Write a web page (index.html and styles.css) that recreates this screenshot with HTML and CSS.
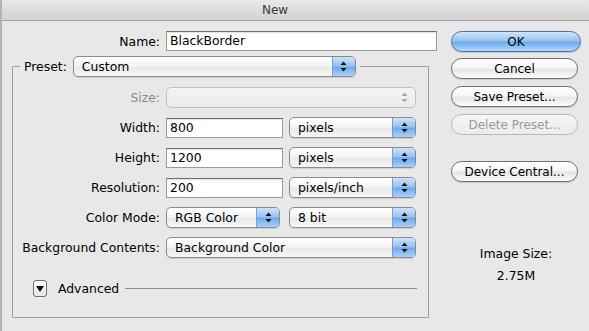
FILE: index.html
```html
<!DOCTYPE html>
<html lang="en">
<head>
  <meta charset="UTF-8" />
  <title>New</title>
  <link rel="stylesheet" href="styles.css">
</head>
<body>
  <div class="window">
    <div class="titlebar">New</div>
    <div class="content">
      <div class="main">
        <div class="name-row">
          <label class="lbl">Name:</label>
          <div class="field name-field">BlackBorder</div>
        </div>

        <fieldset class="preset">
          <legend>
            <span class="legend-lbl">Preset:</span>
            <div class="popup preset-popup">
              <span class="popup-text">Custom</span>
              <span class="arrows"><svg width="7" height="11" viewBox="0 0 7 11"><path d="M3.5 0.5 L6.5 4 L0.5 4 Z M0.5 7 L6.5 7 L3.5 10.5 Z" fill="#111"/></svg></span>
            </div>
          </legend>

          <div class="rows">
            <div class="row">
              <label class="lbl disabled">Size:</label>
              <div class="popup off w-full">
                <span class="popup-text"></span>
                <span class="arrows"><svg width="7" height="11" viewBox="0 0 7 11"><path d="M3.5 0.5 L6.5 4 L0.5 4 Z M0.5 7 L6.5 7 L3.5 10.5 Z" fill="#a8a8a8"/></svg></span>
              </div>
            </div>
            <div class="row">
              <label class="lbl">Width:</label>
              <div class="field w-num">800</div>
              <div class="popup w-unit">
                <span class="popup-text">pixels</span>
                <span class="arrows"><svg width="7" height="11" viewBox="0 0 7 11"><path d="M3.5 0.5 L6.5 4 L0.5 4 Z M0.5 7 L6.5 7 L3.5 10.5 Z" fill="#111"/></svg></span>
              </div>
            </div>
            <div class="row">
              <label class="lbl">Height:</label>
              <div class="field w-num">1200</div>
              <div class="popup w-unit">
                <span class="popup-text">pixels</span>
                <span class="arrows"><svg width="7" height="11" viewBox="0 0 7 11"><path d="M3.5 0.5 L6.5 4 L0.5 4 Z M0.5 7 L6.5 7 L3.5 10.5 Z" fill="#111"/></svg></span>
              </div>
            </div>
            <div class="row">
              <label class="lbl">Resolution:</label>
              <div class="field w-num">200</div>
              <div class="popup w-unit">
                <span class="popup-text">pixels/inch</span>
                <span class="arrows"><svg width="7" height="11" viewBox="0 0 7 11"><path d="M3.5 0.5 L6.5 4 L0.5 4 Z M0.5 7 L6.5 7 L3.5 10.5 Z" fill="#111"/></svg></span>
              </div>
            </div>
            <div class="row">
              <label class="lbl">Color Mode:</label>
              <div class="popup w-mode">
                <span class="popup-text">RGB Color</span>
                <span class="arrows"><svg width="7" height="11" viewBox="0 0 7 11"><path d="M3.5 0.5 L6.5 4 L0.5 4 Z M0.5 7 L6.5 7 L3.5 10.5 Z" fill="#111"/></svg></span>
              </div>
              <div class="popup w-unit">
                <span class="popup-text">8 bit</span>
                <span class="arrows"><svg width="7" height="11" viewBox="0 0 7 11"><path d="M3.5 0.5 L6.5 4 L0.5 4 Z M0.5 7 L6.5 7 L3.5 10.5 Z" fill="#111"/></svg></span>
              </div>
            </div>
            <div class="row">
              <label class="lbl">Background Contents:</label>
              <div class="popup w-full">
                <span class="popup-text">Background Color</span>
                <span class="arrows"><svg width="7" height="11" viewBox="0 0 7 11"><path d="M3.5 0.5 L6.5 4 L0.5 4 Z M0.5 7 L6.5 7 L3.5 10.5 Z" fill="#111"/></svg></span>
              </div>
            </div>
          </div>

          <div class="advanced">
            <span class="disclosure"><svg width="8" height="6" viewBox="0 0 8 6"><path d="M0 0 L8 0 L4 6 Z" fill="#111"/></svg></span>
            <span class="adv-text">Advanced</span>
            <span class="adv-line"></span>
          </div>
        </fieldset>
      </div>

      <div class="side">
        <button class="btn default">OK</button>
        <button class="btn">Cancel</button>
        <button class="btn">Save Preset...</button>
        <button class="btn off">Delete Preset...</button>
        <button class="btn central">Device Central...</button>
        <div class="image-size">
          <div>Image Size:</div>
          <div class="size-val">2.75M</div>
        </div>
      </div>
    </div>
  </div>
</body>
</html>
```

FILE: styles.css
```css
body {
  margin: 0;
  background: #e8e8e8;
  font-family: "DejaVu Sans", sans-serif;
  font-size: 12.4px;
  color: #000;
}

.window {
  width: 589px;
  height: 331px;
  border-left: 2px solid #b9b3ad;
  box-sizing: border-box;
  overflow: hidden;
}

.titlebar {
  height: 20px;
  line-height: 20px;
  text-align: center;
  color: #3a3a3a;
  font-size: 12px;
  background: linear-gradient(to bottom, #e9e9e9, #d2d2d2);
  border-bottom: 1px solid #a2a2a2;
  padding-right: 41px;
}

.content {
  display: flex;
  padding-top: 10px;
}

.main {
  padding-left: 10px;
  width: 425px;
}

/* etiquetas */
.lbl {
  text-align: right;
  white-space: nowrap;
}

.disabled {
  color: #8c8c8c;
}

.name-row {
  display: grid;
  grid-template-columns: 148px 271px;
  column-gap: 6px;
  align-items: center;
  height: 20px;
}

.field {
  height: 20px;
  box-sizing: border-box;
  background: #fff;
  border: 1px solid #9a9a9a;
  border-top-color: #6e6e6e;
  box-shadow: inset 0 1px 1px rgba(0, 0, 0, 0.12);
  padding: 0 3px;
  line-height: 18px;
}

.name-field {
  width: 271px;
}

/* grupo preset */
.preset {
  margin: 5px 0 0 0;
  padding: 10px 11px 20px 0;
  width: 417px;
  box-sizing: border-box;
  border: 1px solid #9c9c9c;
  border-radius: 1px;
}

.preset legend {
  display: flex;
  align-items: center;
  margin-left: 7px;
  padding: 0 4px;
}

.legend-lbl {
  margin-right: 6px;
}

.popup {
  display: flex;
  align-items: center;
  height: 21px;
  box-sizing: border-box;
  border: 1px solid #8b8b8b;
  border-radius: 5px;
  background: linear-gradient(to bottom, #ffffff 0%, #f5f5f5 45%, #e9e9e9 55%, #f7f7f7 100%);
  box-shadow: 0 1px 1px rgba(0, 0, 0, 0.12);
  overflow: hidden;
}

.popup-text {
  flex: 1;
  padding-left: 8px;
  white-space: nowrap;
}

.arrows {
  width: 22px;
  height: 100%;
  display: flex;
  align-items: center;
  justify-content: center;
  border-left: 1px solid #7f9cc4;
  background: linear-gradient(to bottom, #cfe3f9 0%, #95c1f1 48%, #6ea9ec 52%, #a8d1fb 100%);
}

.popup.off {
  border-color: #c2c2c2;
  box-shadow: none;
  background: linear-gradient(to bottom, #f4f4f4, #ebebeb);
}

.popup.off .arrows {
  border-left: none;
  background: none;
}

.preset-popup {
  width: 283px;
}

.rows {
  display: flex;
  flex-direction: column;
  gap: 9px;
}

.row {
  display: flex;
  align-items: center;
  height: 21px;
}

.row .lbl {
  width: 147px;
  margin-right: 6px;
}

.w-full {
  width: 250px;
}

.w-num {
  width: 117px;
  margin-right: 6px;
}

.w-mode {
  width: 114px;
  margin-right: 9px;
}

.w-unit {
  width: 127px;
}

/* avanzado */
.advanced {
  display: flex;
  align-items: center;
  margin-top: 22px;
  margin-left: 20px;
  height: 17px;
}

.disclosure {
  width: 14px;
  height: 17px;
  box-sizing: border-box;
  border: 1px solid #6f6f6f;
  border-radius: 3px;
  background: linear-gradient(to bottom, #ffffff, #e6e6e6);
  display: flex;
  align-items: center;
  justify-content: center;
}

.adv-text {
  margin-left: 11px;
}

.adv-line {
  flex: 1;
  height: 1px;
  background: #8e8e8e;
  margin-left: 6px;
}

/* botones laterales */
.side {
  margin-left: 14px;
  display: flex;
  flex-direction: column;
  width: 130px;
}

.btn {
  height: 21px;
  width: 127px;
  margin-bottom: 7px;
  padding: 0;
  font-family: "DejaVu Sans", sans-serif;
  font-size: 12px;
  color: #000;
  border: 1px solid #6e6e6e;
  border-radius: 11px;
  background: linear-gradient(to bottom, #ffffff 0%, #f6f6f6 45%, #e6e6e6 55%, #fbfbfb 100%);
  box-shadow: 0 1px 1px rgba(0, 0, 0, 0.15);
}

.btn.default {
  width: 130px;
  margin-bottom: 6px;
  border-color: #4f6f9b;
  background: linear-gradient(to bottom, #d2e5fa 0%, #98c4f2 45%, #6caaee 55%, #b3daff 100%);
}

.btn.off {
  color: #9a9a9a;
  border-color: #b9b9b9;
  box-shadow: none;
  background: linear-gradient(to bottom, #f6f6f6, #ececec);
}

.btn.central {
  margin-top: 19px;
}

.image-size {
  margin-top: 58px;
  text-align: center;
  line-height: 14px;
}

.size-val {
  margin-top: 8px;
}
```
